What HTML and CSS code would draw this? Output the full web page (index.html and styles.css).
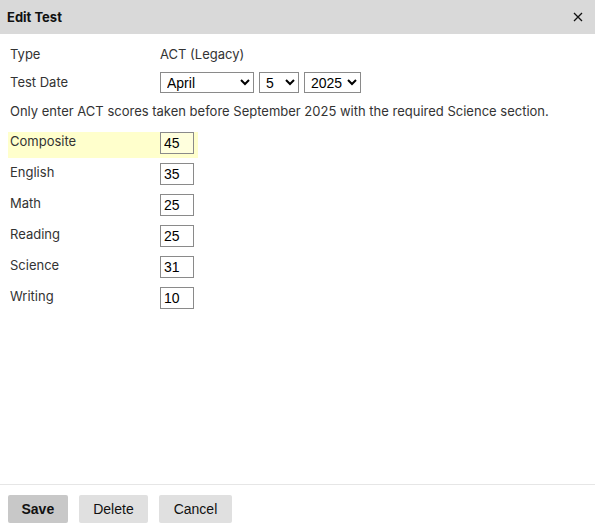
FILE: index.html
```html
<!DOCTYPE html>
<html>
<head>
<meta charset="utf-8">
<link rel="stylesheet" href="styles.css">
</head>
<body>
<div class="dialog">
  <div class="header">
    <span class="title">Edit Test</span>
    <svg class="close" width="10" height="10" viewBox="0 0 10 10"><path d="M1 1L9 9M9 1L1 9" stroke="#111" stroke-width="1.3" fill="none"/></svg>
  </div>
  <div class="content">
    <div class="row info"><span class="label">Type</span><span class="value">ACT (Legacy)</span></div>
    <div class="row info date"><span class="label">Test Date</span>
      <span class="value selects">
        <select class="sel month"><option>April</option></select>
        <select class="sel day"><option>5</option></select>
        <select class="sel year"><option>2025</option></select>
      </span>
    </div>
    <p class="note">Only enter ACT scores taken before September 2025 with the required Science section.</p>
    <div class="scores">
      <div class="row score hl"><span class="label">Composite</span><input class="box" value="45"></div>
      <div class="row score"><span class="label">English</span><input class="box" value="35"></div>
      <div class="row score"><span class="label">Math</span><input class="box" value="25"></div>
      <div class="row score"><span class="label">Reading</span><input class="box" value="25"></div>
      <div class="row score"><span class="label">Science</span><input class="box" value="31"></div>
      <div class="row score"><span class="label">Writing</span><input class="box" value="10"></div>
    </div>
  </div>
  <div class="footer">
    <button class="btn save">Save</button>
    <button class="btn">Delete</button>
    <button class="btn">Cancel</button>
  </div>
</div>
</body>
</html>
```

FILE: styles.css
```css
html, body { margin: 0; padding: 0; background: #fff; }
body { font-family: Inter, "Liberation Sans", sans-serif; font-size: 13px; color: #333; }
.dialog { width: 595px; height: 528px; display: flex; flex-direction: column; }
.header { height: 34px; flex: none; background: #d9d9d9; display: flex; align-items: center; justify-content: space-between; padding: 0 12px 0 7px; box-sizing: border-box; }
.title { font-weight: 700; font-size: 13px; color: #111; }
.close { display: block; }
.content { flex: 1; padding: 10px 8px 0 8px; }
.row { display: flex; align-items: flex-start; padding-left: 2px; }
.label { width: 150px; flex: none; }
.info { height: 20px; line-height: 20px; margin-bottom: 8px; }
.info.date { height: 22px; }
.selects { display: flex; gap: 5px; }
.sel { font-family: "Liberation Sans", Arial, sans-serif; font-size: 14px; color: #000; height: 21px; border: 1px solid #8a8a8a; border-radius: 0; background: #fff; padding: 0 2px; margin: 0; }
.month { width: 94px; }
.day { width: 40px; }
.year { width: 57px; }
.note { margin: 0 0 12px 0; padding-left: 2px; line-height: 18px; }
.scores { display: flex; flex-direction: column; gap: 5px; }
.score { height: 26px; line-height: 18px; width: 188px; }
.hl { background: #ffffcc; }
.box { width: 34px; height: 22px; box-sizing: border-box; border: 1px solid #8a8a8a; padding: 0 3px; margin: 0; font-family: "Liberation Sans", Arial, sans-serif; font-size: 14px; color: #000; background: #fff; border-radius: 0; }
.hl .box { background: #ffffdd; }
.footer { height: 44px; flex: none; box-sizing: border-box; border-top: 1px solid #e6e6e6; display: flex; align-items: flex-start; gap: 11px; padding: 10px 8px 0 8px; }
.btn { font-family: "Liberation Sans", Arial, sans-serif; font-size: 14px; color: #111; background: #e0e0e0; border: none; border-radius: 2px; height: 28px; padding: 0 14.5px; margin: 0; }
.save { background: #c8c8c8; font-weight: 700; padding: 0 13.5px; }
```
